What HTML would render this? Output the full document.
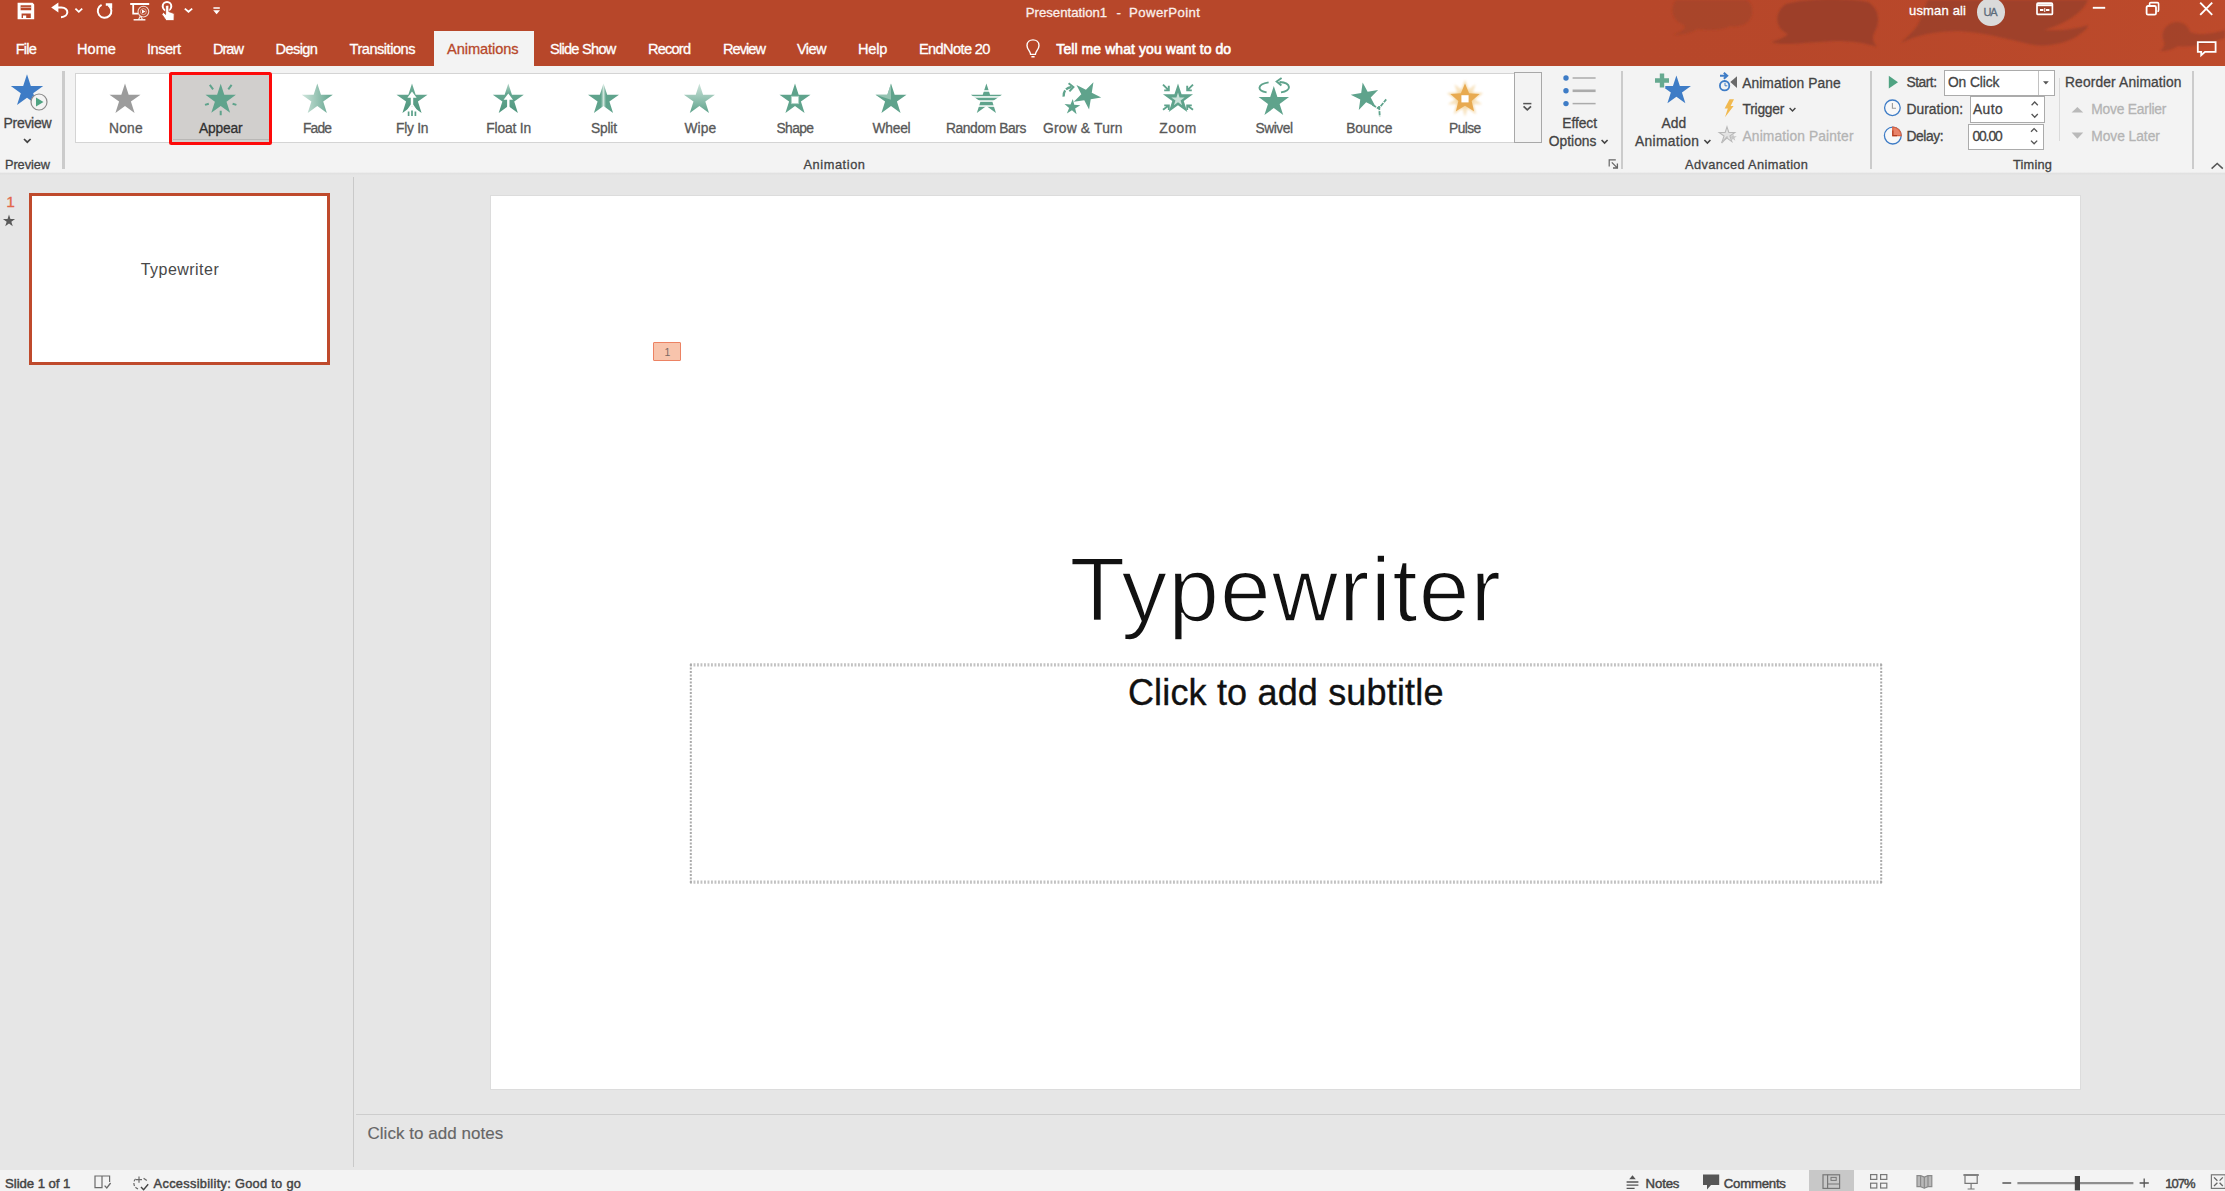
<!DOCTYPE html>
<html>
<head>
<meta charset="utf-8">
<title>Presentation1 - PowerPoint</title>
<style>
html,body{margin:0;padding:0;background:#E6E6E6;}
body{width:2225px;height:1191px;overflow:hidden;font-family:"Liberation Sans",sans-serif;}
#root{position:relative;width:2225px;height:1191px;overflow:hidden;background:#E6E6E6;}
.t{position:absolute;white-space:pre;line-height:1;display:block;-webkit-text-stroke:0.3px;}
.b{position:absolute;box-sizing:border-box;}
svg{position:absolute;overflow:visible;}
</style>
</head>
<body>
<div id="root">
<div class="b" style="left:0px;top:0px;width:2225px;height:66px;background:#B7472A;"></div>
<svg style="left:0;top:0" width="2225" height="66" viewBox="0 0 2225 66">
<defs><filter id="bl" x="-5%" y="-5%" width="110%" height="110%"><feGaussianBlur stdDeviation="0.9"/></filter>
<linearGradient id="tb" x1="0" x2="1" y1="0" y2="0"><stop offset="0" stop-color="#B7472A" stop-opacity="0"/><stop offset="1" stop-color="#C24D2C" stop-opacity="0.55"/></linearGradient></defs>
<rect x="1600" y="0" width="625" height="66" fill="url(#tb)"/>
<g fill="#9A3F28" filter="url(#bl)">
<path opacity="0.5" d="M1676 0 C1670 8 1672 18 1680 23 C1690 27 1683 31 1673 35 C1684 35 1692 32 1698 29 C1712 31 1722 30 1730 26 C1742 28 1752 22 1752 12 C1753 6 1750 2 1746 0 Z"/>
<path opacity="0.9" d="M1786 4 C1774 12 1774 28 1788 34 C1784 38 1778 40 1771 42 C1784 46 1810 42 1836 41 C1852 41 1866 43 1877 47 C1872 41 1872 37 1875 31 C1881 20 1878 8 1868 2 C1850 -2 1805 -2 1786 4 Z"/>
<path opacity="0.85" d="M1928 0 C1922 10 1922 22 1914 30 C1908 36 1904 40 1901 43 C1916 35 1936 31 1958 31 C1985 32 2010 40 2034 45 C2052 47 2070 42 2080 34 C2086 30 2088 27 2088 25 C2078 29 2062 31 2044 30 C2064 24 2082 14 2088 0 Z"/>
<path opacity="0.7" d="M2176 22 C2164 24 2160 34 2164 42 C2165 46 2163 49 2160 51 C2168 51 2174 49 2178 46 C2190 48 2206 44 2225 38 L2225 30 C2212 34 2200 36 2190 32 C2188 26 2184 22 2176 22 Z"/>
</g></svg>
<div class="b" style="left:433.5px;top:30.5px;width:100.5px;height:36px;background:#F3F3F3;"></div>
<div class="b" style="left:0px;top:66px;width:2225px;height:106.6px;background:#F3F3F3;"></div>
<div class="b" style="left:0px;top:172.4px;width:2225px;height:2.2px;background:linear-gradient(#F3F3F3,#DFDFDF 55%,#E6E6E6);"></div>
<span class="t" style="left:1025.7px;top:6.0px;font-size:13.2px;color:#FBEFEB;letter-spacing:0.01px;">Presentation1</span>
<span class="t" style="left:1116.6px;top:6.0px;font-size:13.2px;color:#FBEFEB;letter-spacing:0.00px;">-</span>
<span class="t" style="left:1129.1px;top:6.0px;font-size:13.2px;color:#FBEFEB;letter-spacing:0.38px;">PowerPoint</span>
<span class="t" style="left:1909.0px;top:4.0px;font-size:13px;color:#fff;letter-spacing:0.17px;">usman ali</span>
<div class="b" style="left:1977px;top:-2px;width:27.5px;height:27.5px;background:#DADADA;border-radius:50%;"></div>
<span class="t" style="left:1983.5px;top:7.0px;font-size:11px;color:#5C6B7A;letter-spacing:-1.28px;">UA</span>
<span class="t" style="left:15.8px;top:42.0px;font-size:14.6px;color:#fff;letter-spacing:-0.84px;">File</span>
<span class="t" style="left:77.0px;top:42.0px;font-size:14.6px;color:#fff;letter-spacing:0.02px;">Home</span>
<span class="t" style="left:147.0px;top:42.0px;font-size:14.6px;color:#fff;letter-spacing:-0.50px;">Insert</span>
<span class="t" style="left:213.0px;top:42.0px;font-size:14.6px;color:#fff;letter-spacing:-1.02px;">Draw</span>
<span class="t" style="left:275.5px;top:42.0px;font-size:14.6px;color:#fff;letter-spacing:-0.59px;">Design</span>
<span class="t" style="left:349.5px;top:42.0px;font-size:14.6px;color:#fff;letter-spacing:-0.48px;">Transitions</span>
<span class="t" style="left:550.0px;top:42.0px;font-size:14.6px;color:#fff;letter-spacing:-0.74px;">Slide Show</span>
<span class="t" style="left:648.0px;top:42.0px;font-size:14.6px;color:#fff;letter-spacing:-0.81px;">Record</span>
<span class="t" style="left:723.0px;top:42.0px;font-size:14.6px;color:#fff;letter-spacing:-0.97px;">Review</span>
<span class="t" style="left:797.0px;top:42.0px;font-size:14.6px;color:#fff;letter-spacing:-0.63px;">View</span>
<span class="t" style="left:858.0px;top:42.0px;font-size:14.6px;color:#fff;letter-spacing:-0.18px;">Help</span>
<span class="t" style="left:919.0px;top:42.0px;font-size:14.6px;color:#fff;letter-spacing:-0.63px;">EndNote 20</span>
<span class="t" style="left:447.0px;top:42.0px;font-size:14.6px;color:#B7472A;letter-spacing:-0.07px;">Animations</span>
<span class="t" style="left:1056.3px;top:41.8px;font-size:14px;color:#fff;letter-spacing:0.08px;-webkit-text-stroke:0.6px;">Tell me what you want to do</span>
<svg style="left:0;top:66px" width="70" height="110" viewBox="0 66 70 110"><polygon points="27.00,74.20 30.82,85.95 43.17,85.95 33.18,93.21 36.99,104.95 27.00,97.69 17.01,104.95 20.82,93.21 10.83,85.95 23.18,85.95" fill="#3E7CC6"/><circle cx="39" cy="102" r="8" fill="#F3F3F3" stroke="#8A8A8A" stroke-width="1.2"/><path d="M36 97.5 L43.5 102 L36 106.5 Z" fill="#4FA382"/><path d="M24 139 L27.3 142.2 L30.6 139" fill="none" stroke="#444" stroke-width="1.7"/></svg>
<span class="t" style="left:3.5px;top:115.5px;font-size:14px;color:#444444;letter-spacing:-0.30px;">Preview</span>
<span class="t" style="left:5.0px;top:158.8px;font-size:12.8px;color:#444444;letter-spacing:-0.09px;">Preview</span>
<div class="b" style="left:62.4px;top:71px;width:2.6px;height:97.5px;background:#CBCBCB;"></div>
<div class="b" style="left:74.5px;top:73px;width:1441px;height:69.8px;background:#fff;border:1px solid #D4D4D4;"></div>
<div class="b" style="left:169.2px;top:72.3px;width:103px;height:72.9px;background:#D1CFCD;border:3.7px solid #FD0A0A;border-radius:2.5px;"></div>
<div class="b" style="left:173px;top:138.5px;width:96px;height:1.5px;background:#B9B7B5;"></div>
<span class="t" style="left:109.0px;top:121.5px;font-size:13.8px;color:#585858;letter-spacing:0.24px;">None</span>
<span class="t" style="left:198.9px;top:121.5px;font-size:13.8px;color:#303030;letter-spacing:-0.18px;">Appear</span>
<span class="t" style="left:303.0px;top:121.5px;font-size:13.8px;color:#585858;letter-spacing:-0.82px;">Fade</span>
<span class="t" style="left:396.0px;top:121.5px;font-size:13.8px;color:#585858;letter-spacing:-0.25px;">Fly In</span>
<span class="t" style="left:486.3px;top:121.5px;font-size:13.8px;color:#585858;letter-spacing:-0.16px;">Float In</span>
<span class="t" style="left:590.9px;top:121.5px;font-size:13.8px;color:#585858;letter-spacing:-0.19px;">Split</span>
<span class="t" style="left:684.4px;top:121.5px;font-size:13.8px;color:#585858;letter-spacing:0.15px;">Wipe</span>
<span class="t" style="left:776.5px;top:121.5px;font-size:13.8px;color:#585858;letter-spacing:-0.60px;">Shape</span>
<span class="t" style="left:872.5px;top:121.5px;font-size:13.8px;color:#585858;letter-spacing:-0.23px;">Wheel</span>
<span class="t" style="left:946.0px;top:121.5px;font-size:13.8px;color:#585858;letter-spacing:-0.40px;">Random Bars</span>
<span class="t" style="left:1043.0px;top:121.5px;font-size:13.8px;color:#585858;letter-spacing:0.21px;">Grow &amp; Turn</span>
<span class="t" style="left:1159.2px;top:121.5px;font-size:13.8px;color:#585858;letter-spacing:0.61px;">Zoom</span>
<span class="t" style="left:1255.4px;top:121.5px;font-size:13.8px;color:#585858;letter-spacing:-0.46px;">Swivel</span>
<span class="t" style="left:1346.2px;top:121.5px;font-size:13.8px;color:#585858;letter-spacing:-0.10px;">Bounce</span>
<span class="t" style="left:1449.1px;top:121.5px;font-size:13.8px;color:#585858;letter-spacing:-0.61px;">Pulse</span>
<svg style="left:0;top:66px" width="1520" height="80" viewBox="0 66 1520 80">
<defs><filter id="bl2" x="-20%" y="-20%" width="140%" height="140%"><feGaussianBlur stdDeviation="0.9"/></filter>
<linearGradient id="gFade" x1="0" x2="1" y1="0" y2="0"><stop offset="0" stop-color="#CFE5DC"/><stop offset="1" stop-color="#5FA38C"/></linearGradient>
<linearGradient id="gWipe" x1="0" x2="0" y1="0" y2="1"><stop offset="0" stop-color="#CFE5DC"/><stop offset="1" stop-color="#5FA38C"/></linearGradient>
<linearGradient id="gFloat" x1="0" x2="0" y1="0" y2="1"><stop offset="0" stop-color="#B5D6C9"/><stop offset="0.35" stop-color="#66A892"/><stop offset="1" stop-color="#4E957D"/></linearGradient>
<linearGradient id="gFly" x1="0" x2="0" y1="0" y2="1"><stop offset="0" stop-color="#6FAE98"/><stop offset="1" stop-color="#4E957D"/></linearGradient>
<linearGradient id="gSplit" x1="0" x2="1" y1="0" y2="0"><stop offset="0" stop-color="#5FA38C"/><stop offset="0.42" stop-color="#5FA38C"/><stop offset="0.5" stop-color="#CFE5DC"/><stop offset="0.58" stop-color="#5FA38C"/><stop offset="1" stop-color="#5FA38C"/></linearGradient>
<radialGradient id="gPulse" cx="0.5" cy="0.5" r="0.5"><stop offset="0" stop-color="#E8A84A"/><stop offset="0.7" stop-color="#ECB25E"/><stop offset="1" stop-color="#F5D9A8" stop-opacity="0.3"/></radialGradient>
</defs>
<polygon points="125.00,83.40 128.66,94.66 140.50,94.66 130.92,101.62 134.58,112.89 125.00,105.93 115.42,112.89 119.08,101.62 109.50,94.66 121.34,94.66" fill="#9C9C9C" />
<polygon points="220.70,83.80 224.29,94.86 235.92,94.86 226.51,101.69 230.10,112.74 220.70,105.91 211.30,112.74 214.89,101.69 205.48,94.86 217.11,94.86" fill="#5FA38C" />
<path d="M213.1 89.3 L209.8 84.8 M228.3 89.3 L231.6 84.8 M208.8 103.7 L205.0 104.9 M232.6 103.7 L236.4 104.9 M220.7 110.8 L220.7 115.3" stroke="#5FA38C" stroke-width="2" fill="none"/>
<polygon points="317.30,83.40 320.96,94.66 332.80,94.66 323.22,101.62 326.88,112.89 317.30,105.93 307.72,112.89 311.38,101.62 301.80,94.66 313.64,94.66" fill="url(#gFade)" />
<polygon points="412.00,83.40 415.66,94.66 427.50,94.66 417.92,101.62 421.58,112.89 412.00,105.93 402.42,112.89 406.08,101.62 396.50,94.66 408.34,94.66" fill="url(#gFly)" />
<path d="M412 91.6 L407.4 97.8 H410.8 V104.5 L407.4 109.5 L408.8 110.4 L412 106 L415.2 110.4 L416.6 109.5 L413.2 104.5 V97.8 H416.6 Z" fill="#fff"/>
<path d="M408.6 111.6 V116 M412 110.4 V116 M415.4 111.6 V116" stroke="#5A9F88" stroke-width="1.7" fill="none"/>
<polygon points="508.30,83.40 511.96,94.66 523.80,94.66 514.22,101.62 517.88,112.89 508.30,105.93 498.72,112.89 502.38,101.62 492.80,94.66 504.64,94.66" fill="url(#gFloat)" />
<path d="M508.3 93.4 L503.6 99.8 H507.1 V108.8 H509.5 V99.8 H513 Z" fill="#fff"/>
<polygon points="603.50,83.40 607.16,94.66 619.00,94.66 609.42,101.62 613.08,112.89 603.50,105.93 593.92,112.89 597.58,101.62 588.00,94.66 599.84,94.66" fill="url(#gSplit)" />
<polygon points="699.40,83.40 703.06,94.66 714.90,94.66 705.32,101.62 708.98,112.89 699.40,105.93 689.82,112.89 693.48,101.62 683.90,94.66 695.74,94.66" fill="url(#gWipe)" />
<polygon points="795.00,83.40 798.66,94.66 810.50,94.66 800.92,101.62 804.58,112.89 795.00,105.93 785.42,112.89 789.08,101.62 779.50,94.66 791.34,94.66" fill="#5FA38C" />
<rect x="791.3" y="96.3" width="7.4" height="7.4" fill="#fff" stroke="#A9CFC0" stroke-width="0.8"/>
<polygon points="891.00,83.40 894.66,94.66 906.50,94.66 896.92,101.62 900.58,112.89 891.00,105.93 881.42,112.89 885.08,101.62 875.50,94.66 887.34,94.66" fill="#5FA38C" />
<path d="M891 99.7 L891 83.4 L887.34 94.66 L875.50 94.66 Z" fill="#A5CEBF" opacity="0.75"/>
<polygon points="986.40,83.40 990.06,94.66 1001.90,94.66 992.32,101.62 995.98,112.89 986.40,105.93 976.82,112.89 980.48,101.62 970.90,94.66 982.74,94.66" fill="#5FA38C" />
<rect x="968" y="90.2" width="37" height="1.5" fill="#fff"/>
<rect x="968" y="96.2" width="37" height="1.5" fill="#fff"/>
<rect x="968" y="100.3" width="37" height="1.5" fill="#fff"/>
<rect x="968" y="105.3" width="37" height="1.5" fill="#fff"/>
<polygon points="1093.43,82.19 1091.77,92.67 1101.22,97.48 1090.74,99.14 1089.08,109.62 1084.27,100.17 1073.79,101.83 1081.29,94.33 1076.48,84.88 1085.93,89.69" fill="#5FA38C" />
<polygon points="1072.78,98.92 1074.24,104.77 1080.25,105.19 1075.14,108.39 1076.60,114.24 1071.98,110.36 1066.86,113.56 1069.12,107.97 1064.50,104.09 1070.52,104.51" fill="#5FA38C" />
<path d="M1063.6 96.6 C1063.4 90.4 1066.6 87.6 1071.6 87" stroke="#5FA38C" stroke-width="2.3" fill="none" stroke-dasharray="6.5 1.4"/><path d="M1068.6 83.2 L1073.4 87 L1069.4 91.4" stroke="#5FA38C" stroke-width="2" fill="none"/>
<polygon points="1178.00,83.40 1181.55,94.32 1193.03,94.32 1183.74,101.07 1187.29,111.98 1178.00,105.24 1168.71,111.98 1172.26,101.07 1162.97,94.32 1174.45,94.32" fill="#5FA38C" />
<polygon points="1178.00,92.60 1179.57,97.44 1184.66,97.44 1180.54,100.43 1182.11,105.26 1178.00,102.27 1173.89,105.26 1175.46,100.43 1171.34,97.44 1176.43,97.44" fill="#C9E1D8"/>
<path d="M1163.0 84.6 L1168.8 90.4 M1164.2 90.4 L1168.8 90.4 L1168.8 85.8 M1193.0 84.6 L1187.2 90.4 M1191.8 90.4 L1187.2 90.4 L1187.2 85.8 M1163.0 109.8 L1168.8 105.4 M1164.2 105.4 L1168.8 105.4 L1168.8 110.0 M1193.0 109.8 L1187.2 105.4 M1191.8 105.4 L1187.2 105.4 L1187.2 110.0" stroke="#5FA38C" stroke-width="1.9" fill="none"/>
<polygon points="1273.80,86.00 1277.39,97.06 1289.02,97.06 1279.61,103.89 1283.20,114.94 1273.80,108.11 1264.40,114.94 1267.99,103.89 1258.58,97.06 1270.21,97.06" fill="#5FA38C" />
<path d="M1266.6 92.4 C1257 90.6 1256.6 84.6 1268.6 82.4 M1279.5 82 C1291.6 82.8 1292 90.6 1281 92.4 M1281.6 78 L1276.6 81.6 L1281.4 85.6" stroke="#5FA38C" stroke-width="1.9" fill="none"/>
<polygon points="1362.66,82.42 1367.64,91.79 1378.09,89.95 1370.72,97.58 1375.70,106.94 1366.17,102.29 1358.80,109.92 1360.28,99.42 1350.74,94.77 1361.19,92.93" fill="#5FA38C" />
<path d="M1372.4 104.8 L1378.8 108.6 L1386.2 99.4 M1379 106 L1379.8 116.6" stroke="#5FA38C" stroke-width="1.8" fill="none" stroke-dasharray="4.2 1"/>
<polygon points="1465.00,79.80 1469.70,92.33 1483.07,92.93 1472.61,101.27 1476.17,114.17 1465.00,106.80 1453.83,114.17 1457.39,101.27 1446.93,92.93 1460.30,92.33" fill="#F1C983" opacity="0.6" filter="url(#bl2)"/>
<polygon points="1475.58,84.24 1471.66,96.64 1482.12,104.36 1469.11,104.46 1465.00,116.80 1460.89,104.46 1447.88,104.36 1458.34,96.64 1454.42,84.24 1465.00,91.80" fill="#F1C983" opacity="0.5" filter="url(#bl2)"/>
<polygon points="1465.00,83.40 1469.11,93.14 1479.65,94.04 1471.66,100.96 1474.05,111.26 1465.00,105.80 1455.95,111.26 1458.34,100.96 1450.35,94.04 1460.89,93.14" fill="#E8AA50"/>
<rect x="1461.4" y="95.2" width="7.2" height="7.2" fill="#fff"/>
</svg>
<div class="b" style="left:1514.3px;top:72.3px;width:27.8px;height:70.9px;background:#F3F3F3;border:1.7px solid #A8A8A8;"></div>
<svg style="left:1520px;top:100px" width="16" height="14" viewBox="1520 100 16 14"><path d="M1523.2 103.6 H1531.4" stroke="#555" stroke-width="1.5"/><path d="M1523.6 106.4 L1527.3 109.8 L1531 106.4" fill="none" stroke="#555" stroke-width="1.8"/></svg>
<span class="t" style="left:803.5px;top:158.8px;font-size:12.8px;color:#444444;letter-spacing:0.57px;">Animation</span>
<svg style="left:1540px;top:66px" width="90" height="110" viewBox="1540 66 90 110"><circle cx="1566" cy="78" r="2.7" fill="#3E7CC6"/><path d="M1572.6 78 H1595.6" stroke="#ABABAB" stroke-width="1.5"/><circle cx="1566" cy="90.8" r="2.7" fill="#3E7CC6"/><path d="M1572.6 90.8 H1595.6" stroke="#ABABAB" stroke-width="2.6"/><circle cx="1566" cy="103.6" r="2.7" fill="#3E7CC6"/><path d="M1572.6 103.6 H1595.6" stroke="#ABABAB" stroke-width="1.5"/><path d="M1601.6 140 L1604.6 143 L1607.6 140" fill="none" stroke="#444" stroke-width="1.6"/><path d="M1609.2 166.5 V159.8 H1615.8" fill="none" stroke="#666" stroke-width="1.2"/><path d="M1611.8 162.4 L1617 167.6 M1617.4 163.6 V168 H1613" fill="none" stroke="#666" stroke-width="1.3"/></svg>
<span class="t" style="left:1562.3px;top:116.5px;font-size:13.8px;color:#444444;letter-spacing:-0.07px;">Effect</span>
<span class="t" style="left:1548.7px;top:135.0px;font-size:13.8px;color:#444444;letter-spacing:0.04px;">Options</span>
<div class="b" style="left:1621px;top:71px;width:2.2px;height:97.5px;background:#CBCBCB;"></div>
<svg style="left:1625px;top:66px" width="250" height="110" viewBox="1625 66 250 110"><polygon points="1676.40,75.50 1679.84,86.07 1690.95,86.07 1681.96,92.61 1685.39,103.18 1676.40,96.64 1667.41,103.18 1670.84,92.61 1661.85,86.07 1672.96,86.07" fill="#3E7CC6"/><path d="M1662 73 V88 M1654.4 80.5 H1669.6" stroke="#F3F3F3" stroke-width="6.6"/><path d="M1662 73.6 V87.4 M1655 80.5 H1669" stroke="#66A990" stroke-width="4.4"/><path d="M1704.4 140 L1707.4 143 L1710.4 140" fill="none" stroke="#444" stroke-width="1.6"/><circle cx="1724.6" cy="85.7" r="4.7" fill="none" stroke="#3E7CC6" stroke-width="1.8"/><path d="M1725 82.8 V85.8 H1727.3" fill="none" stroke="#3E7CC6" stroke-width="1"/><path d="M1720 75.8 H1726 M1723.8 72.8 L1727.2 75.8 L1723.8 78.8" fill="none" stroke="#3E7CC6" stroke-width="2"/><path d="M1737 76.2 V88 L1730.3 82.1 Z" fill="#6A6A6A"/><path d="M1729.5 99.2 L1734 99.2 L1730.6 106 L1733.6 106 L1725 117.2 L1727.8 108.6 L1724.6 108.6 Z" fill="#F1B94F"/><path d="M1789.6 108 L1792.5 111 L1795.4 108" fill="none" stroke="#444" stroke-width="1.4"/><polygon points="1727.00,126.80 1728.84,132.47 1734.80,132.47 1729.98,135.97 1731.82,141.63 1727.00,138.13 1722.18,141.63 1724.02,135.97 1719.20,132.47 1725.16,132.47" fill="#E3E3E3" stroke="#B9B9B9" stroke-width="1.1"/><polygon points="1733.00,133.50 1733.90,136.26 1736.80,136.26 1734.45,137.97 1735.35,140.74 1733.00,139.03 1730.65,140.74 1731.55,137.97 1729.20,136.26 1732.10,136.26" fill="#C6C6C6"/><path d="M1721.5 143 L1727.5 136.5" stroke="#BDBDBD" stroke-width="1.6"/></svg>
<span class="t" style="left:1661.4px;top:116.5px;font-size:13.8px;color:#444444;letter-spacing:0.12px;">Add</span>
<span class="t" style="left:1635.0px;top:135.0px;font-size:13.8px;color:#444444;letter-spacing:0.33px;">Animation</span>
<span class="t" style="left:1742.2px;top:76.9px;font-size:13.8px;color:#444444;letter-spacing:0.08px;">Animation Pane</span>
<span class="t" style="left:1742.5px;top:103.4px;font-size:13.8px;color:#444444;letter-spacing:-0.22px;">Trigger</span>
<span class="t" style="left:1742.5px;top:130.3px;font-size:13.8px;color:#B4B4B4;letter-spacing:0.13px;">Animation Painter</span>
<span class="t" style="left:1685.0px;top:158.8px;font-size:12.8px;color:#444444;letter-spacing:0.37px;">Advanced Animation</span>
<div class="b" style="left:1869.6px;top:71px;width:2.2px;height:97.5px;background:#CBCBCB;"></div>
<svg style="left:1875px;top:66px" width="350" height="110" viewBox="1875 66 350 110"><path d="M1888.8 75.8 L1898 82.2 L1888.8 88.6 Z" fill="#4FA382"/><circle cx="1892.4" cy="107.8" r="7.8" fill="#F8F8F8" stroke="#3E7CC6" stroke-width="1.3"/><path d="M1892.4 103 V108.2 H1896" fill="none" stroke="#9A9A9A" stroke-width="1.1"/><circle cx="1892.8" cy="135.6" r="8.4" fill="#F8F8F8" stroke="#3E7CC6" stroke-width="1.3"/><path d="M1892.8 135.6 V127.2 A8.4 8.4 0 0 1 1901.2 135.6 Z" fill="#E8836A" stroke="#D9623F" stroke-width="1.3"/><path d="M1892.8 130.5 V135.6 H1897" fill="none" stroke="#B13D22" stroke-width="1.1"/><path d="M2071.6 112.6 H2083.2 L2077.4 107 Z" fill="#B9B9B9"/><path d="M2071.6 132.6 H2083.2 L2077.4 138.8 Z" fill="#B9B9B9"/><path d="M2211.6 168.6 L2217.2 163.4 L2222.8 168.6" fill="none" stroke="#555" stroke-width="1.5"/></svg>
<span class="t" style="left:1906.4px;top:76.4px;font-size:13.8px;color:#444444;letter-spacing:-0.46px;">Start:</span>
<span class="t" style="left:1906.4px;top:103.4px;font-size:13.8px;color:#444444;letter-spacing:0.08px;">Duration:</span>
<span class="t" style="left:1906.4px;top:130.4px;font-size:13.8px;color:#444444;letter-spacing:-0.36px;">Delay:</span>
<div class="b" style="left:1943.7px;top:69.6px;width:111.2px;height:26px;background:#fff;border:1.2px solid #ABABAB;"></div>
<div class="b" style="left:2038.2px;top:70.5px;width:1.2px;height:24.3px;background:#C2C2C2;"></div>
<svg style="left:2040px;top:78px" width="12" height="10" viewBox="2040 78 12 10"><path d="M2043 81.2 H2048.8 L2045.9 84.4 Z" fill="#555"/></svg>
<span class="t" style="left:1948.0px;top:76.4px;font-size:13.8px;color:#444444;letter-spacing:-0.11px;">On Click</span>
<div class="b" style="left:1970.2px;top:96.4px;width:74.8px;height:26.3px;background:#fff;border:1.2px solid #ABABAB;"></div>
<span class="t" style="left:1972.9px;top:103.4px;font-size:13.8px;color:#444444;letter-spacing:0.47px;">Auto</span>
<div class="b" style="left:1968.3px;top:123.6px;width:75.8px;height:26.2px;background:#fff;border:1.2px solid #ABABAB;"></div>
<span class="t" style="left:1972.4px;top:130.4px;font-size:13.8px;color:#444444;letter-spacing:-1.06px;">00.00</span>
<svg style="left:2028px;top:98px" width="14" height="52" viewBox="2028 98 14 52"><path d="M2031.6 105.2 L2034.7 102 L2037.8 105.2 M2031.6 114 L2034.7 117.2 L2037.8 114 M2031 131.8 L2034.1 128.6 L2037.2 131.8 M2031 140.6 L2034.1 143.8 L2037.2 140.6" fill="none" stroke="#555" stroke-width="1.3"/></svg>
<div class="b" style="left:2059.4px;top:78px;width:1px;height:63px;background:#DADADA;"></div>
<span class="t" style="left:2065.0px;top:76.4px;font-size:13.8px;color:#444444;letter-spacing:0.14px;">Reorder Animation</span>
<span class="t" style="left:2091.3px;top:103.4px;font-size:13.8px;color:#B4B4B4;letter-spacing:-0.21px;">Move Earlier</span>
<span class="t" style="left:2091.3px;top:130.4px;font-size:13.8px;color:#B4B4B4;letter-spacing:-0.05px;">Move Later</span>
<span class="t" style="left:2013.0px;top:158.6px;font-size:12.8px;color:#444444;letter-spacing:0.19px;">Timing</span>
<div class="b" style="left:2191.6px;top:71px;width:2.2px;height:97.5px;background:#CBCBCB;"></div>
<svg style="left:0;top:0" width="2225" height="66" viewBox="0 0 2225 66"><g fill="none" stroke="#fff" stroke-width="1.6"><path fill-rule="evenodd" fill="#fff" stroke="none" d="M17.6 2.8 H32.6 L34.2 4.4 V19.2 H17.6 Z M20.6 5.2 V10.2 H31.2 V5.2 Z M21.6 13.6 H30.8 V17.9 H21.6 Z M23 15.6 H26.2 V17.9 H23 Z"/><path d="M20.6 7.4 H31.2" stroke="#fff" stroke-width="0.8" opacity="0.7"/><path d="M55 7.6 H61.4 C69.4 7.6 69.4 17 61 17.2" stroke-width="2"/><path d="M51.2 7.6 L58.4 2.6 V12.6 Z" fill="#fff" stroke="none"/><path d="M75.4 8.6 L78.8 11.8 L82.2 8.6" stroke-width="1.8"/><path d="M108.4 5.4 A6.8 6.8 0 1 1 101.6 4.9" stroke-width="2"/><path d="M105.8 3.2 H112.2 V8.4 H109.6 V5.8 H105.8 Z" fill="#fff" stroke="none"/><path d="M130.2 4 H149.2" stroke-width="2"/><path d="M133.2 4.4 V13.6 H138" stroke-width="1.8"/><circle cx="143.4" cy="11.6" r="5.4" stroke-width="1.1" opacity="0.8"/><circle cx="143.4" cy="11.6" r="3" stroke-width="0.9" opacity="0.55"/><path d="M142 9.6 L145.6 11.6 L142 13.6 Z" fill="#fff" stroke="none"/><path d="M140.2 16.2 L138.6 19.4 M140.6 16.2 L142.4 19.4" stroke-width="1.2" opacity="0.85"/><path d="M133.6 19.8 H145.4" stroke-width="1.4"/><circle cx="167" cy="6.2" r="4.3" stroke-width="2"/><path d="M165.6 6.4 V14.4 L163.6 12.6 L161.8 14.2 L166.2 20.6 H174 L174.2 13.6 L168.8 11.6 V6.4 C168.8 4.8 165.6 4.8 165.6 6.4 Z" fill="#fff" stroke="#B7472A" stroke-width="0.8"/><path d="M184.8 8.6 L188.5 11.8 L192.2 8.6" stroke-width="1.8"/><path d="M213.4 8 H219.8" stroke-width="1.5"/><path d="M213.2 10.2 H220 L216.6 14.2 Z" fill="#fff" stroke="none"/><path d="M1030.6 54.4 C1030.4 50.8 1027 49.6 1027 45.4 C1027 38 1039 38 1039 45.4 C1039 49.6 1035.6 50.8 1035.4 54.4 Z M1031.4 56.8 H1034.6" stroke-width="1.4"/><rect x="2037" y="3.2" width="15.4" height="11.2" stroke-width="1.7" rx="1"/><path d="M2037 5.2 H2052.4" stroke-width="2"/><path d="M2040 10 H2043.4 M2046 10 H2049.4" stroke-width="2.2"/><path d="M2044.7 8 V12" stroke-width="1.2" opacity="0.8"/><path d="M2092.8 7.8 H2105.2" stroke-width="1.9"/><rect x="2146.6" y="6" width="9.4" height="8.6" stroke-width="1.8" rx="1.4"/><path d="M2149.6 5 V3.6 C2149.6 3 2150.2 2.6 2150.8 2.6 H2157.4 C2158.2 2.6 2158.6 3 2158.6 3.8 V10 C2158.6 10.8 2158.2 11.4 2157.4 11.4" stroke-width="1.6"/><path d="M2200.2 2.6 L2212.2 14.8 M2212.2 2.6 L2200.2 14.8" stroke-width="1.9"/><path d="M2197.8 42.2 H2215.6 V51.8 H2205 L2201.2 55.2 V51.8 H2197.8 Z" stroke-width="1.8"/></g></svg>
<div class="b" style="left:0px;top:174.6px;width:2225px;height:995.4px;background:#E6E6E6;"></div>
<div class="b" style="left:353px;top:177px;width:1.3px;height:990px;background:#C9C9C9;"></div>
<div class="b" style="left:29.2px;top:192.6px;width:301px;height:172.8px;background:#fff;border:3.2px solid #BF4A2C;"></div>
<span class="t" style="left:6.2px;top:194.4px;font-size:15.5px;color:#E2674A;letter-spacing:0.00px;">1</span>
<svg style="left:0;top:210px" width="20" height="20" viewBox="0 210 20 20"><polygon points="9.00,214.60 10.44,219.02 15.09,219.02 11.33,221.76 12.76,226.18 9.00,223.44 5.24,226.18 6.67,221.76 2.91,219.02 7.56,219.02" fill="#5A5A5A"/></svg>
<span class="t" style="left:140.7px;top:261.8px;font-size:16px;color:#484848;letter-spacing:0.47px;-webkit-text-stroke:0;">Typewriter</span>
<div class="b" style="left:490.3px;top:195.2px;width:1590.8px;height:895.2px;background:#fff;border:1.6px solid #DCDCDC;"></div>
<div class="b" style="left:653.4px;top:342px;width:27.8px;height:19px;background:#F8C4AC;border:1.3px solid #EC8263;border-radius:1px;"></div>
<span class="t" style="left:664.6px;top:347.2px;font-size:10.5px;color:#7A6A64;letter-spacing:0.00px;-webkit-text-stroke:0;">1</span>
<span class="t" style="left:1069.5px;top:544.1px;font-size:91.2px;color:#111;letter-spacing:1.21px;-webkit-text-stroke:1.7px #fff;">Typewriter</span>
<svg style="left:688px;top:660px" width="1198" height="228" viewBox="688 660 1198 228"><path d="M690 664.8 H1882 M690 882.1 H1882" fill="none" stroke="#C2C2C2" stroke-width="3.2" stroke-dasharray="1.9 1.6"/><path d="M690.8 664 V883 M1881.2 664 V883" fill="none" stroke="#ABABAB" stroke-width="2" stroke-dasharray="1.9 1.6"/></svg>
<span class="t" style="left:1127.9px;top:675.3px;font-size:36px;color:#111;letter-spacing:0.17px;-webkit-text-stroke:0.35px;">Click to add subtitle</span>
<div class="b" style="left:355.5px;top:1113.5px;width:1870px;height:1.3px;background:#CDCDCD;"></div>
<span class="t" style="left:367.5px;top:1125.2px;font-size:17px;color:#666;letter-spacing:0.03px;-webkit-text-stroke:0.15px;">Click to add notes</span>
<div class="b" style="left:0px;top:1170px;width:2225px;height:21px;background:#F3F3F3;"></div>
<span class="t" style="left:5.0px;top:1177.0px;font-size:13.2px;color:#444;letter-spacing:-0.05px;-webkit-text-stroke:0.45px;">Slide 1 of 1</span>
<span class="t" style="left:153.6px;top:1177.6px;font-size:12.8px;color:#444;letter-spacing:0.30px;-webkit-text-stroke:0.45px;">Accessibility: Good to go</span>
<span class="t" style="left:1645.6px;top:1177.0px;font-size:13.2px;color:#444;letter-spacing:-0.15px;-webkit-text-stroke:0.45px;">Notes</span>
<span class="t" style="left:1723.8px;top:1177.0px;font-size:13.2px;color:#444;letter-spacing:-0.23px;-webkit-text-stroke:0.45px;">Comments</span>
<span class="t" style="left:2165.2px;top:1177.0px;font-size:13px;color:#444;letter-spacing:-0.92px;-webkit-text-stroke:0.45px;">107%</span>
<div class="b" style="left:1809.2px;top:1170.4px;width:45px;height:20.6px;background:#C8C8C8;"></div>
<svg style="left:0;top:1168px" width="2225" height="23" viewBox="0 1168 2225 23"><g fill="none" stroke="#6A6A6A" stroke-width="1.2"><path d="M95 1176 H102 V1187.6 H95 Z M102 1176 H109.6 V1182"/><path d="M104.6 1185.6 L106.8 1188 L110.6 1183" stroke-width="1.3"/><path d="M135.6 1178.8 A6.2 6.2 0 0 0 139 1189.2" stroke-dasharray="3 1.6"/><path d="M139 1176.4 V1182.8 M136 1179.6 H142"/><path d="M141 1187 L143.6 1189.8 L148.2 1184.2" stroke-width="1.4" stroke="#444"/><path d="M143.6 1178.2 L146.8 1180.6" /><path d="M1626.6 1182 H1638.4 M1626.6 1185.2 H1638.4 M1626.6 1188.4 H1634.6" stroke="#555" stroke-width="1.3"/><path d="M1629.2 1179.2 H1635.8 L1632.5 1175.2 Z" fill="#555" stroke="none"/><path d="M1703 1174.6 H1719.2 V1185 H1711 L1707 1189.4 V1185 H1703 Z" fill="#555" stroke="none"/><rect x="1823" y="1174.8" width="16.6" height="13.6" stroke="#777"/><path d="M1827.6 1174.8 V1188.4 M1827.6 1184 H1839.6" stroke="#777"/><rect x="1831" y="1177.4" width="5.2" height="3" stroke="#777" stroke-width="1"/><rect x="1870.6" y="1174.6" width="6.2" height="4.8" stroke="#777"/><rect x="1880.6" y="1174.6" width="6.2" height="4.8" stroke="#777"/><rect x="1870.6" y="1183.2" width="6.2" height="4.8" stroke="#777"/><rect x="1880.6" y="1183.2" width="6.2" height="4.8" stroke="#777"/><path d="M1917 1175.6 H1920.6 L1924.3 1177 L1928 1175.6 H1931.8 V1186.6 H1928 L1924.3 1188.2 L1920.6 1186.6 H1917 Z" fill="#B9B9B9" stroke="#8A8A8A"/><path d="M1920.6 1175.6 V1186.6 M1924.3 1177 V1188.2 M1928 1175.6 V1186.6" stroke="#8A8A8A"/><path d="M1963.4 1175 H1978.8" stroke="#666" stroke-width="1.6"/><path d="M1965 1176 V1183.4 H1977.2 V1176" stroke="#777"/><path d="M1971.1 1183.4 V1188.4 M1967.6 1189 H1974.6" stroke="#777"/><path d="M2002.4 1183 H2011.2 M2139.6 1183 H2148.8 M2144.2 1178.4 V1187.6" stroke="#555" stroke-width="1.3"/><path d="M2017.4 1183.2 H2133.4" stroke="#8E8E8E" stroke-width="2.2"/><rect x="2074.8" y="1176" width="5.2" height="14.4" fill="#444" stroke="none"/><rect x="2211.4" y="1174.8" width="14" height="13.6" stroke="#777"/><path d="M2214 1177.4 L2217.4 1180.8 M2222.8 1177.4 L2219.6 1180.6 M2214 1186 L2217.4 1182.8 M2222.8 1186 L2219.6 1182.8" stroke="#666" stroke-width="1.3"/></g></svg>
</div>
</body>
</html>
